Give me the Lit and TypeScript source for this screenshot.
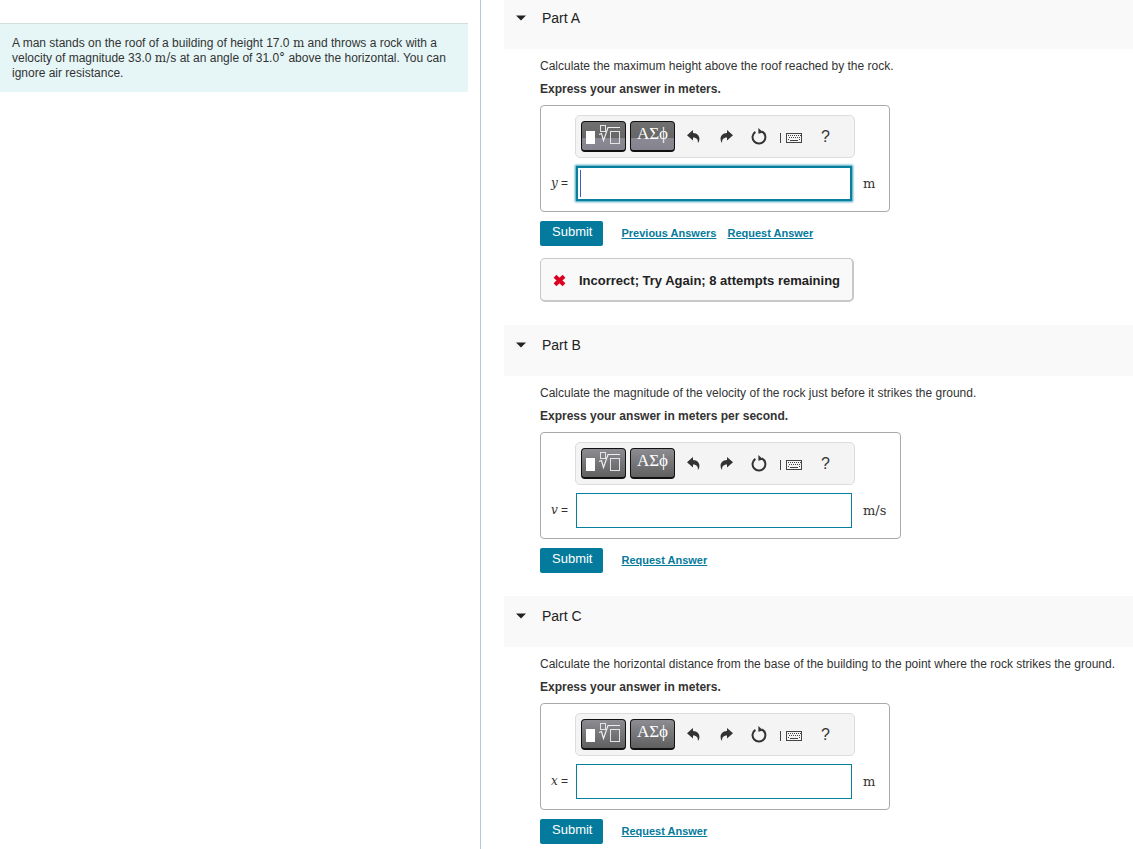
import { LitElement, html, svg, css, nothing } from "lit";
import { customElement, property } from "lit/decorators.js";

interface Part {
  id: string;
  title: string;
  prompt: string;
  instruction: string;
  symbol: string;
  unit: string;
  active: boolean;
  feedback?: string;
}

const PARTS: Part[] = [
  {
    id: "a",
    title: "Part A",
    prompt: "Calculate the maximum height above the roof reached by the rock.",
    instruction: "Express your answer in meters.",
    symbol: "y",
    unit: "m",
    active: true,
    feedback: "Incorrect; Try Again; 8 attempts remaining",
  },
  {
    id: "b",
    title: "Part B",
    prompt: "Calculate the magnitude of the velocity of the rock just before it strikes the ground.",
    instruction: "Express your answer in meters per second.",
    symbol: "v",
    unit: "m/s",
    active: false,
  },
  {
    id: "c",
    title: "Part C",
    prompt:
      "Calculate the horizontal distance from the base of the building to the point where the rock strikes the ground.",
    instruction: "Express your answer in meters.",
    symbol: "x",
    unit: "m",
    active: false,
  },
];

const curvedArrow = svg`<path d="M0 5.2 L6 0 V3 C10.6 3.2 12.6 6 12.4 9.2 C12.3 11 11.7 12.2 10.9 13 C11.2 9.6 9.8 7.6 6 7.5 V10.4 Z" fill="#333"/>`;

@customElement("math-toolbar")
export class MathToolbar extends LitElement {
  @property({ type: Boolean }) active = false;

  static styles = css`
    :host {
      display: block;
    }
    .bar {
      box-sizing: border-box;
      display: flex;
      align-items: center;
      height: 43px;
      padding: 0 5px;
      border: 1px solid #dcdcdc;
      border-radius: 5px;
      background: #f4f4f4;
    }
    button {
      display: flex;
      align-items: center;
      justify-content: center;
      width: 33px;
      height: 31px;
      padding: 0;
      border: 0;
      background: none;
      color: #333;
      font: 16px/20px "Liberation Sans", Arial, sans-serif;
      cursor: pointer;
    }
    .palette {
      box-sizing: border-box;
      width: 45px;
      margin-right: 4px;
      border: 1px solid #111;
      border-bottom-width: 2px;
      border-radius: 4px;
      background: linear-gradient(#8c8c92, #606060);
      color: #fff;
      font: 17px/24px "Liberation Serif", "Times New Roman", serif;
      padding-bottom: 4px;
    }
    .palette.greek {
      margin-right: 2px;
    }
    .active .palette {
      background: linear-gradient(#707070 0%, #666 58%, #8b8a94 59%, #85848e 100%);
    }
    svg {
      display: block;
    }
  `;

  render() {
    return html`<div class="bar ${this.active ? "active" : ""}" role="toolbar">
      <button class="palette" type="button" aria-label="Templates">
        <svg width="37" height="24" viewBox="0 0 37 24" fill="none">
          <rect x="1" y="9" width="9" height="13" fill="#fff" />
          <rect x="15.5" y="3.5" width="5" height="6" stroke="#e4e4e4" />
          <path d="M14 12.5 L16.5 11.5 L18.5 18.5 L23 5.5 H35" stroke="#eee" stroke-width="1.2" />
          <rect x="25.5" y="9.5" width="9" height="12" stroke="#e4e4e4" />
        </svg>
      </button>
      <button class="palette greek" type="button" aria-label="Symbols">ΑΣϕ</button>
      <button type="button" aria-label="Undo">
        <svg width="13" height="14" viewBox="0 0 13 14">${curvedArrow}</svg>
      </button>
      <button type="button" aria-label="Redo">
        <svg width="13" height="14" viewBox="0 0 13 14">
          <g transform="translate(13 0) scale(-1 1)">${curvedArrow}</g>
        </svg>
      </button>
      <button type="button" aria-label="Reset">
        <svg width="17" height="18" viewBox="0 0 17 18" fill="none">
          <path d="M11 3.5 A6.4 6.4 0 1 1 4.4 3.8" stroke="#333" stroke-width="2" />
          <path d="M7.4 0 L12.2 4.4 L7.4 5.8 Z" fill="#333" />
        </svg>
      </button>
      <button type="button" aria-label="Keyboard shortcuts">
        <svg width="25" height="14" viewBox="0 0 25 14" fill="none" shape-rendering="crispEdges">
          <path d="M0.5 3 V13" stroke="#444" />
          <rect x="6.5" y="3.5" width="15" height="9" stroke="#444" />
          <path d="M8 5.5 H21" stroke="#444" stroke-dasharray="1 1" />
          <path d="M9 7.5 H20" stroke="#444" stroke-dasharray="1 1" />
          <path d="M8 9.5 H9 M10 10.5 H18 M19 9.5 H20" stroke="#444" />
        </svg>
      </button>
      <button type="button" aria-label="Help">?</button>
    </div>`;
  }
}

@customElement("question-part")
export class QuestionPart extends LitElement {
  @property({ attribute: false }) part!: Part;

  static styles = css`
    :host {
      display: block;
      margin-bottom: 23px;
    }
    .header {
      box-sizing: border-box;
      display: flex;
      align-items: center;
      gap: 16px;
      height: 51px;
      padding: 0 12px 11px;
      background: #f9f9f9;
    }
    .toggle {
      display: block;
      width: 10px;
      height: 8px;
      padding: 0;
      border: 0;
      background: none;
    }
    .toggle svg {
      display: block;
    }
    h2 {
      margin: 0;
      color: #222;
      font-size: 14px;
      font-weight: 400;
      line-height: 20px;
    }
    .body {
      padding: 10px 12px 0 36px;
    }
    p {
      margin: 0 0 8px;
      line-height: 15px;
    }
    .instruction {
      font-weight: 700;
    }
    .answer {
      box-sizing: border-box;
      display: grid;
      grid-template-columns: 24px 280px auto;
      row-gap: 8px;
      align-items: center;
      width: fit-content;
      padding: 9px 14px 10px 10px;
      border: 1px solid #a9a9a9;
      border-radius: 4px;
    }
    math-toolbar {
      grid-column: 2;
    }
    label {
      grid-column: 1;
      white-space: nowrap;
    }
    .symbol,
    .unit {
      font-family: "DejaVu Serif", "Liberation Serif", serif;
    }
    .symbol {
      font-size: 12px;
      font-style: italic;
    }
    .unit {
      margin-left: 8px;
      font-size: 13px;
    }
    input {
      box-sizing: border-box;
      width: 276px;
      height: 35px;
      margin: 0 1px;
      padding: 0 8px;
      border: 1px solid #077f9f;
      border-radius: 0;
      background: #fff;
      font: 14px "Liberation Sans", Arial, sans-serif;
      outline: none;
    }
    input.active {
      background: linear-gradient(#3b5fc4, #3b5fc4) 3px center / 1px 27px no-repeat #fff;
      box-shadow: 0 0 2px 1px #3aa0b8, inset 0 0 0 1px #077f9f;
    }
    .actions {
      display: flex;
      align-items: center;
      gap: 11px;
      margin-top: 9px;
    }
    .submit {
      height: 25px;
      margin-right: 7px;
      padding: 0 11px 3px 12px;
      border: 0;
      border-radius: 2px;
      background: #047a9c;
      color: #fff;
      font: 13px/20px "Liberation Sans", Arial, sans-serif;
    }
    a {
      color: #047a9c;
      font-size: 11px;
      font-weight: 700;
      line-height: 15px;
    }
    .feedback {
      box-sizing: border-box;
      display: flex;
      align-items: center;
      gap: 13px;
      width: fit-content;
      height: 44px;
      margin-top: 12px;
      padding: 1px 12px 0;
      border: 1px solid #c8c8c8;
      border-right-width: 2px;
      border-bottom-width: 2px;
      border-radius: 5px;
      background: #f9f9f9;
      color: #222;
      font-size: 13px;
      font-weight: 700;
    }
  `;

  render() {
    const p = this.part;
    return html`<section>
      <div class="header">
        <button class="toggle" type="button" aria-label="Collapse ${p.title}">
          <svg width="10" height="8" viewBox="0 0 10 8"><path d="M0 1.5 H10 L5 6.5 Z" fill="#222" /></svg>
        </button>
        <h2>${p.title}</h2>
      </div>
      <div class="body">
        <p>${p.prompt}</p>
        <p class="instruction">${p.instruction}</p>
        <div class="answer">
          <math-toolbar ?active=${p.active}></math-toolbar>
          <label for="answer-${p.id}"><span class="symbol">${p.symbol}</span> =</label>
          <input id="answer-${p.id}" type="text" autocomplete="off" class=${p.active ? "active" : ""} />
          <span class="unit">${p.unit}</span>
        </div>
        <div class="actions">
          <button class="submit" type="button">Submit</button>
          ${p.feedback ? html`<a href="#previous">Previous Answers</a>` : nothing}
          <a href="#request">Request Answer</a>
        </div>
        ${p.feedback
          ? html`<div class="feedback">
              <svg width="13" height="13" viewBox="0 0 13 13">
                <path d="M2 2.2 L11 10.8 M11 2.2 L2 10.8" stroke="#db0020" stroke-width="4" />
              </svg>
              <span>${p.feedback}</span>
            </div>`
          : nothing}
      </div>
    </section>`;
  }
}

@customElement("app-root")
export class AppRoot extends LitElement {
  static styles = css`
    :host {
      display: flex;
      height: 100vh;
      overflow: hidden;
      background: #fff;
      color: #333;
      font: 12px/15px "Liberation Sans", Arial, sans-serif;
    }
    aside {
      box-sizing: border-box;
      flex: 0 0 481px;
      padding: 23px 12px 0 0;
      border-right: 1px solid #b5c9d9;
    }
    .intro {
      margin: 0;
      padding: 12px 12px 11px;
      border-top: 1px solid #d5dddd;
      background: #e6f6f7;
    }
    .math {
      font-family: "DejaVu Serif", "Liberation Serif", serif;
      font-size: 12px;
      line-height: 1;
    }
    main {
      flex: 1;
      min-width: 0;
      padding-left: 23px;
      overflow-y: auto;
      scrollbar-width: none;
    }
    .parts {
      margin-top: -2px;
    }
  `;

  render() {
    return html`<aside>
        <p class="intro">
          A man stands on the roof of a building of height 17.0 <span class="math">m</span> and throws a rock with a
          velocity of magnitude 33.0 <span class="math">m/s</span> at an angle of 31.0<span class="math">°</span>
          above the horizontal. You can ignore air resistance.
        </p>
      </aside>
      <main>
        <div class="parts">${PARTS.map((part) => html`<question-part .part=${part}></question-part>`)}</div>
      </main>`;
  }
}
